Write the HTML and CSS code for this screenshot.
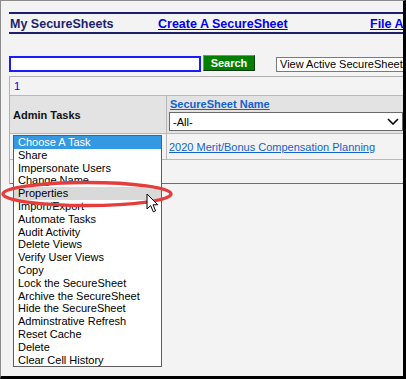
FILE: index.html
```html
<!DOCTYPE html>
<html lang="en">
<head>
    <meta charset="UTF-8">
    <meta name="viewport" content="width=device-width, initial-scale=1.0">
    <title>My SecureSheets</title>
    <link rel="stylesheet" href="styles.css">
</head>
<body>
    <div class="shot">
        <div class="page">
            <div class="topnav">
                <div class="nav-cell nav-title">My SecureSheets</div>
                <div class="nav-cell nav-mid"><a href="#">Create A SecureSheet</a></div>
                <div class="nav-cell"><a href="#">File Attachments</a></div>
            </div>

            <div class="search-row">
                <div class="search-box"></div>
                <div class="search-btn">Search</div>
                <div class="view-select">View Active SecureSheets</div>
            </div>

            <div class="grid">
                <div class="row row-pager">
                    <a href="#" class="pager">1</a>
                </div>
                <div class="row row-head">
                    <div class="cell cell-left">Admin Tasks</div>
                    <div class="cell cell-right">
                        <a href="#" class="col-link">SecureSheet Name</a>
                        <div class="filter-select">
                            <span>-All-</span>
                            <svg class="chevron" width="12" height="7" viewBox="0 0 12 7">
                                <polyline points="1,1 6,6 11,1" fill="none" stroke="#000" stroke-width="1.6"/>
                            </svg>
                        </div>
                    </div>
                </div>
                <div class="row row-item">
                    <div class="cell cell-left"></div>
                    <div class="cell cell-right">
                        <a href="#" class="sheet-link">2020 Merit/Bonus Compensation Planning</a>
                    </div>
                </div>
                <div class="row row-last"></div>
            </div>
        </div>

        <ul class="task-list">
            <li class="selected">Choose A Task</li>
            <li>Share</li>
            <li>Impersonate Users</li>
            <li>Change Name</li>
            <li class="hover">Properties</li>
            <li>Import/Export</li>
            <li>Automate Tasks</li>
            <li>Audit Activity</li>
            <li>Delete Views</li>
            <li>Verify User Views</li>
            <li>Copy</li>
            <li>Lock the SecureSheet</li>
            <li>Archive the SecureSheet</li>
            <li>Hide the SecureSheet</li>
            <li>Adminstrative Refresh</li>
            <li>Reset Cache</li>
            <li>Delete</li>
            <li>Clear Cell History</li>
        </ul>

        <svg class="ring" width="180" height="36" viewBox="0 0 180 36">
            <ellipse cx="86" cy="17" rx="84" ry="11.5" fill="none" stroke="#e63c3c" stroke-width="3.4"/>
        </svg>

        <svg class="cursor" width="14" height="21" viewBox="0 0 14 21">
            <path d="M1 1 L1 16 L4.6 12.6 L7.3 18.8 L9.6 17.8 L7 11.8 L11.8 11.8 Z" fill="#fff" stroke="#000" stroke-width="1" stroke-linejoin="miter"/>
        </svg>
    </div>
</body>
</html>
```

FILE: styles.css
```css
body {
    margin: 0;
    font-family: "Liberation Sans", Arial, sans-serif;
    font-size: 11px;
    background-color: #ffffff;
}
.shot {
    position: relative;
    width: 406px;
    height: 379px;
    box-sizing: border-box;
    border-left: 1px solid #8c8c8c;
    border-top: 1px solid #8c8c8c;
    border-right: 3px solid #000;
    border-bottom: 3px solid #000;
    background-color: #f3f3f3;
    overflow: hidden;
}
.page {
    width: 500px;
    padding: 11px 0 0 8px;
}
.topnav {
    display: flex;
    align-items: center;
    height: 18px;
    border-top: 2px solid #1e1e6e;
    border-bottom: 2px solid #1e1e6e;
    font-size: 12.5px;
    font-weight: bold;
}
.nav-cell {
    flex-shrink: 0;
    padding-left: 1px;
    padding-top: 1px;
    white-space: nowrap;
}
.nav-title {
    width: 147px;
    color: #1e1e6e;
}
.nav-mid {
    width: 211px;
}
.topnav a {
    color: #0000ee;
}
.search-row {
    display: flex;
    align-items: flex-start;
    margin-top: 22px;
    height: 18px;
}
.search-box {
    flex-shrink: 0;
    width: 192px;
    height: 16px;
    box-sizing: border-box;
    border: 2px solid #1a1aff;
    background-color: #fff;
}
.search-btn {
    flex-shrink: 0;
    margin-left: 2px;
    margin-top: -1px;
    width: 52px;
    height: 16px;
    box-sizing: border-box;
    border: 1px solid;
    border-color: #5aa85a #0d3a0d #0d3a0d #5aa85a;
    background-color: #008000;
    color: #fff;
    font-weight: bold;
    line-height: 14px;
    text-align: center;
}
.view-select {
    flex-shrink: 0;
    margin-left: 21px;
    margin-top: 1px;
    width: 150px;
    height: 15px;
    box-sizing: border-box;
    border: 1px solid #7a7a7a;
    background-color: #fff;
    padding-left: 3px;
    line-height: 13px;
    white-space: nowrap;
}
.grid {
    margin-top: 2px;
    border-top: 1px solid #b0b0b0;
    border-left: 1px solid #b0b0b0;
}
.row {
    display: flex;
    border-bottom: 1px solid #b8b8b8;
}
.row-pager {
    height: 18px;
    align-items: center;
    padding-left: 4px;
}
.pager {
    color: #0000ee;
    text-decoration: none;
}
.row-head {
    height: 37px;
    background-color: #e3e3e3;
}
.row-item {
    height: 25px;
}
.row-last {
    height: 23px;
    border-bottom-color: #6e6e6e;
}
.cell-left {
    flex-shrink: 0;
    width: 157px;
    box-sizing: border-box;
    border-right: 1px solid #b8b8b8;
    padding-left: 3px;
}
.row-head .cell-left {
    display: flex;
    align-items: center;
    font-weight: bold;
    color: #111;
}
.cell-right {
    flex: 1;
    padding-left: 2px;
}
.col-link {
    display: block;
    margin-top: 2px;
    padding-left: 1px;
    font-weight: bold;
    color: #1462cc;
    line-height: 13px;
}
.filter-select {
    display: flex;
    align-items: center;
    justify-content: space-between;
    margin-top: 1px;
    width: 234px;
    height: 19px;
    box-sizing: border-box;
    border: 1px solid #6a6a6a;
    background-color: #fff;
    padding: 0 3px;
}
.chevron {
    display: block;
}
.row-item .cell-right {
    display: flex;
    align-items: center;
}
.sheet-link {
    color: #1462cc;
    white-space: nowrap;
}
.task-list {
    position: absolute;
    left: 12px;
    top: 134px;
    width: 149px;
    box-sizing: border-box;
    margin: 0;
    padding: 0;
    list-style: none;
    border: 1px solid #5e5e5e;
    background-color: #fff;
}
.task-list li {
    height: 12.8px;
    line-height: 12.8px;
    padding-left: 4px;
    color: #000;
    white-space: nowrap;
}
.task-list .selected {
    background-color: #3598e2;
    color: #fff;
}
.task-list .hover {
    background-color: #d9d9d9;
}
.ring {
    position: absolute;
    left: 0;
    top: 176px;
}
.cursor {
    position: absolute;
    left: 145px;
    top: 192px;
}
```
